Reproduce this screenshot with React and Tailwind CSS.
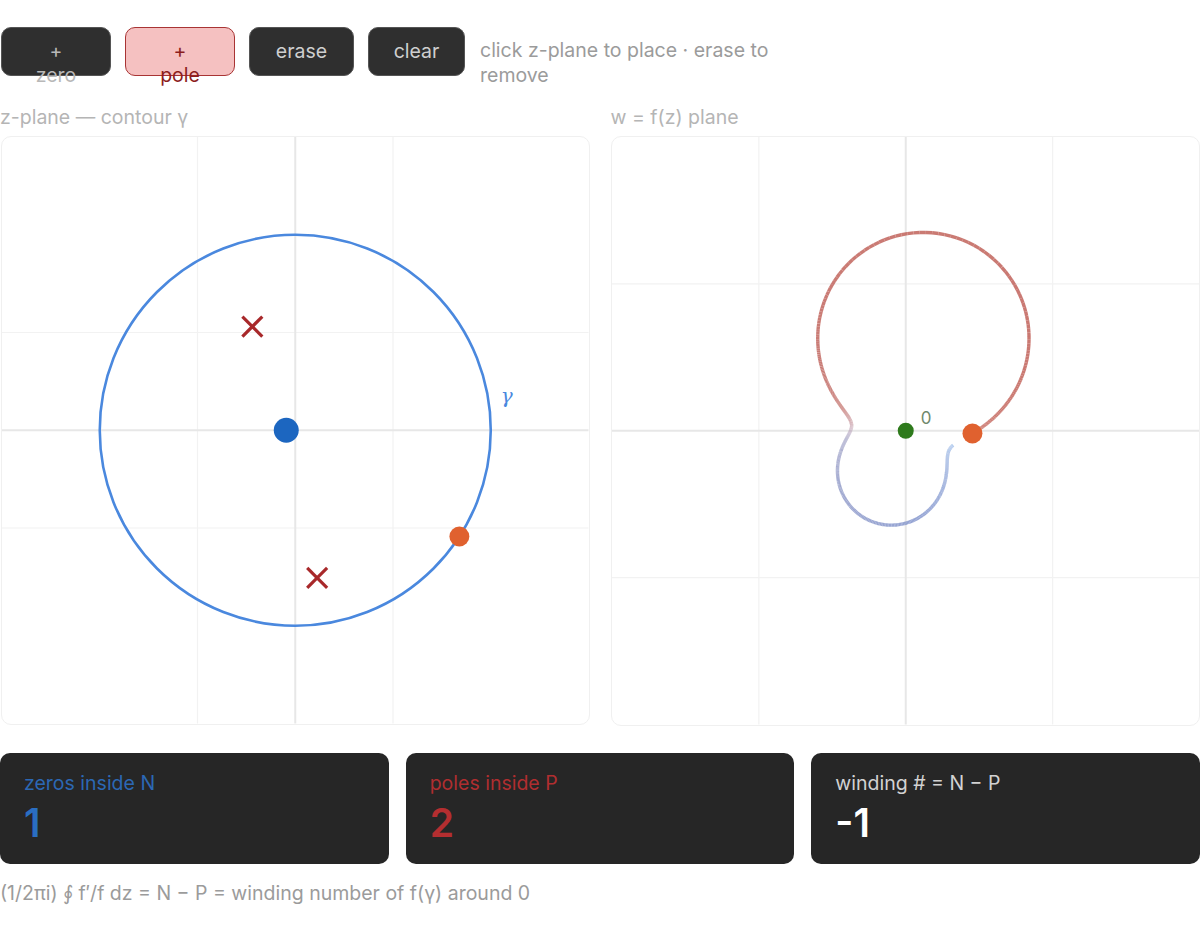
import React from "react";

// complex helpers
const sub = (a, b) => ({ re: a.re - b.re, im: a.im - b.im });
const mul = (a, b) => ({ re: a.re * b.re - a.im * b.im, im: a.re * b.im + a.im * b.re });
const div = (a, b) => {
  const d = b.re * b.re + b.im * b.im;
  return { re: (a.re * b.re + a.im * b.im) / d, im: (a.im * b.re - a.re * b.im) / d };
};

const ZEROS = [{ re: -0.092, im: 0 }];
const POLES = [
  { re: -0.439, im: 1.061 },
  { re: 0.224, im: -1.51 },
];
const RADIUS = 2;
const T_NOW = 2 * Math.PI - (32.9 * Math.PI) / 180;

const f = (z) => {
  let num = { re: 1, im: 0 };
  ZEROS.forEach((q) => (num = mul(num, sub(z, q))));
  let den = { re: 1, im: 0 };
  POLES.forEach((p) => (den = mul(den, sub(z, p))));
  return div(num, den);
};

const SIZE = 588;
const C = 294;
const ZS = 98; // px per unit, z-plane (range ±3)
const WS = 147; // px per unit, w-plane (range ±2)

function Grid({ step }) {
  return (
    <g>
      {[-1, 1].map((k) => (
        <g key={k}>
          <line x1={C + k * step} y1={0} x2={C + k * step} y2={SIZE} stroke="#f2f2f2" strokeWidth="1.2" />
          <line x1={0} y1={C + k * step} x2={SIZE} y2={C + k * step} stroke="#f2f2f2" strokeWidth="1.2" />
        </g>
      ))}
      <line x1={C} y1={0} x2={C} y2={SIZE} stroke="#e7e7e7" strokeWidth="2" />
      <line x1={0} y1={C} x2={SIZE} y2={C} stroke="#e7e7e7" strokeWidth="2" />
    </g>
  );
}

function Cross({ x, y }) {
  const a = 10;
  return (
    <g stroke="#a8282a" strokeWidth="3.2" strokeLinecap="butt">
      <line x1={x - a} y1={y - a} x2={x + a} y2={y + a} />
      <line x1={x - a} y1={y + a} x2={x + a} y2={y - a} />
    </g>
  );
}

function ZPlane() {
  const zx = (re) => C + re * ZS;
  const zy = (im) => C - im * ZS;
  const nowX = C + RADIUS * ZS * Math.cos(T_NOW);
  const nowY = C - RADIUS * ZS * Math.sin(T_NOW);
  return (
    <svg viewBox={`0 0 ${SIZE} ${SIZE}`} className="block w-full h-full">
      <Grid step={ZS} />
      <circle cx={C} cy={C} r={RADIUS * ZS} fill="none" stroke="#4a88de" strokeWidth="2.6" />
      <text
        x={500}
        y={267}
        fill="#4a88de"
        fontSize="20"
        fontStyle="italic"
        fontFamily="'DejaVu Serif', serif"
      >
        γ
      </text>
      {POLES.map((p, i) => (
        <Cross key={i} x={zx(p.re)} y={zy(p.im)} />
      ))}
      {ZEROS.map((q, i) => (
        <circle key={i} cx={zx(q.re)} cy={zy(q.im)} r="12.5" fill="#1c66c0" />
      ))}
      <circle cx={nowX} cy={nowY} r="10" fill="#e0612f" />
    </svg>
  );
}

// blue trail fading into red as the contour is traversed
const lerp = (a, b, u) => a + (b - a) * u;
function trailColor(u) {
  const stops = [
    [0.0, [140, 178, 232, 0.7]],
    [0.3, [120, 140, 200, 0.8]],
    [0.5, [150, 150, 190, 0.75]],
    [0.56, [196, 168, 186, 0.7]],
    [0.7, [192, 104, 98, 0.85]],
    [1.0, [194, 94, 84, 0.85]],
  ];
  for (let i = 0; i < stops.length - 1; i++) {
    const [u0, c0] = stops[i];
    const [u1, c1] = stops[i + 1];
    if (u <= u1) {
      const k = (u - u0) / (u1 - u0);
      return `rgba(${Math.round(lerp(c0[0], c1[0], k))},${Math.round(lerp(c0[1], c1[1], k))},${Math.round(
        lerp(c0[2], c1[2], k)
      )},${lerp(c0[3], c1[3], k).toFixed(3)})`;
    }
  }
  return "rgba(194,94,84,0.85)";
}

function WPlane() {
  const N = 700;
  const pts = [];
  for (let i = 0; i <= N; i++) {
    const t = (T_NOW * i) / N;
    const z = { re: RADIUS * Math.cos(t), im: RADIUS * Math.sin(t) };
    const w = f(z);
    pts.push([C + w.re * WS, C - w.im * WS]);
  }
  const segs = [];
  for (let i = 0; i < N; i++) {
    segs.push(
      <line
        key={i}
        x1={pts[i][0]}
        y1={pts[i][1]}
        x2={pts[i + 1][0]}
        y2={pts[i + 1][1]}
        stroke={trailColor(i / N)}
        strokeWidth="3.4"
        strokeLinecap="butt"
      />
    );
  }
  const end = pts[N];
  return (
    <svg viewBox={`0 0 ${SIZE} ${SIZE}`} className="block w-full h-full">
      <Grid step={WS} />
      {segs}
      <circle cx={C} cy={C} r="8" fill="#2e7a1c" />
      <text x={309} y={287} fill="#6f8a6c" fontSize="17" fontFamily="Inter, sans-serif">
        0
      </text>
      <circle cx={end[0]} cy={end[1]} r="10" fill="#e0612f" />
    </svg>
  );
}

function Stat({ label, value, labelClass, valueClass }) {
  return (
    <div className="bg-[#262626] rounded-[10px] h-[111px] pl-[24px] pt-[17px]">
      <div className={`text-[19.5px] leading-[26px] ${labelClass}`}>{label}</div>
      <div className={`text-[39px] leading-[46px] mt-[4px] font-semibold ${valueClass}`}>{value}</div>
    </div>
  );
}

export default function App() {
  const btn =
    "h-[49px] rounded-[10px] border flex flex-col items-center justify-start pt-[11px] text-[19.5px] leading-[24px] shrink-0";
  return (
    <div className="bg-white min-h-screen pt-[27px] font-['Inter',sans-serif]">
      <div className="flex items-start gap-[14px]">
        <button className={`${btn} w-[110px] ml-[1px] bg-[#2f2f2f] border-[#555555] text-[#b8b8b8]`}>
          <span>+</span>
          <span>zero</span>
        </button>
        <button className={`${btn} w-[110px] bg-[#f5c1c1] border-[#a83434] text-[#8c1d1d]`}>
          <span>+</span>
          <span>pole</span>
        </button>
        <button className={`${btn} w-[105px] bg-[#2f2f2f] border-[#555555] text-[#cfcfcf]`}>
          <span>erase</span>
        </button>
        <button className={`${btn} w-[97px] bg-[#2f2f2f] border-[#555555] text-[#cfcfcf]`}>
          <span>clear</span>
        </button>
        <div className="w-[300px] pt-[11px] text-[19.5px] leading-[25px] text-[#9b9b9b] ml-[1px]">
          click z-plane to place · erase to remove
        </div>
      </div>

      <div className="grid grid-cols-2 gap-[21px] mt-[17px]">
        <div>
          <div className="text-[19.5px] leading-[24px] text-[#b5b5b5] h-[24px]">z-plane — contour γ</div>
          <div className="mt-[7px] aspect-square rounded-[10px] border border-[#f0f0f0] overflow-hidden bg-white ml-[1px]">
            <ZPlane />
          </div>
        </div>
        <div>
          <div className="text-[19.5px] leading-[24px] text-[#b5b5b5] h-[24px]">w = f(z) plane</div>
          <div className="mt-[7px] aspect-square rounded-[10px] border border-[#f0f0f0] overflow-hidden bg-white">
            <WPlane />
          </div>
        </div>
      </div>

      <div className="grid grid-cols-3 gap-[17px] mt-[27px]">
        <Stat label="zeros inside N" value="1" labelClass="text-[#2c68b4]" valueClass="text-[#2a6ec2]" />
        <Stat label="poles inside P" value="2" labelClass="text-[#b02e30]" valueClass="text-[#b42e30]" />
        <Stat label="winding # = N − P" value="-1" labelClass="text-[#d2d2d2]" valueClass="text-white" />
      </div>

      <div className="mt-[17px] text-[19.5px] leading-[24px] text-[#9b9b9b]">
        (1/2πi) ∮ f′/f dz = N − P = winding number of f(γ) around 0
      </div>
    </div>
  );
}
